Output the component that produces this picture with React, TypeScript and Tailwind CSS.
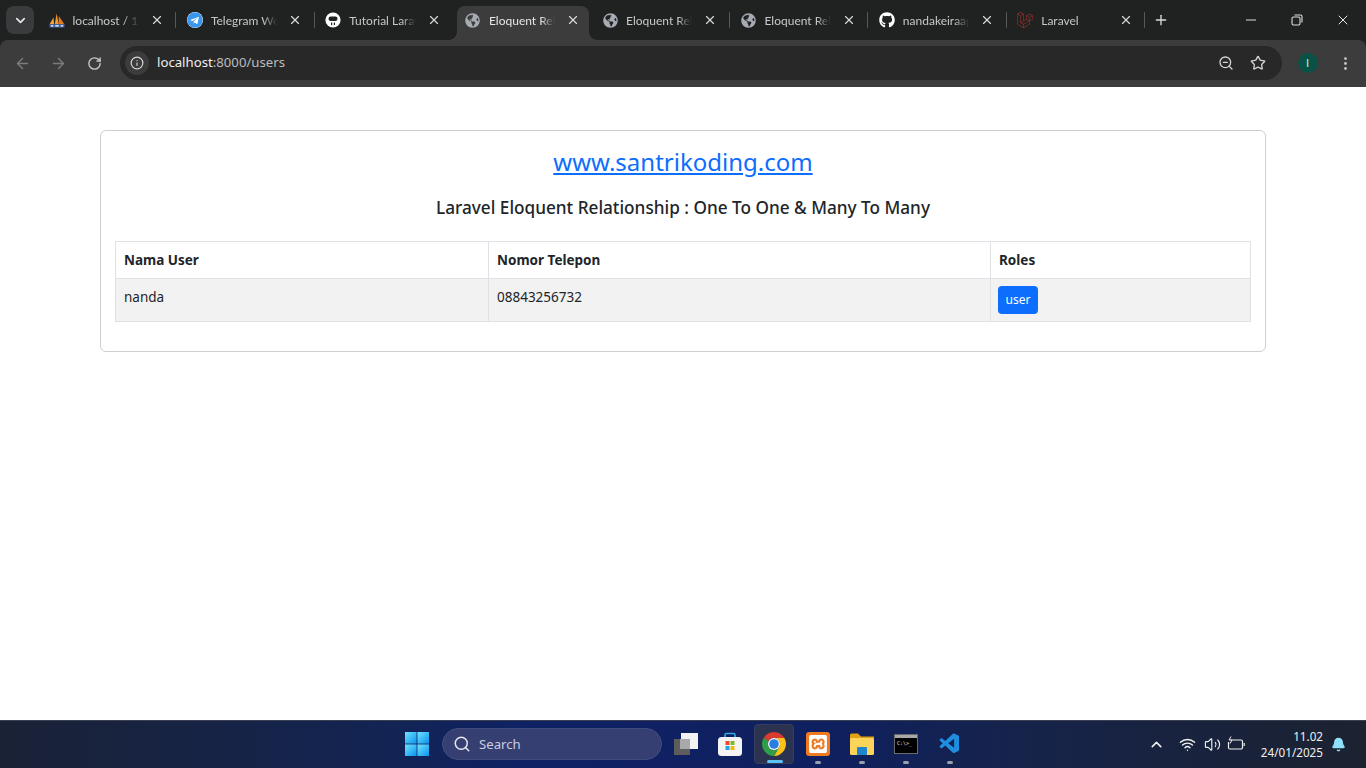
import { ArrowLeft, ArrowRight, RotateCw, Info, ZoomOut, Star, EllipsisVertical, X, Plus, Minus, ChevronDown, ChevronUp, Search, Wifi, Volume2, Bell } from "lucide-react";
import { FaGithub, FaTelegram, FaGlobeAmericas } from "react-icons/fa";
import { SiLaravel, SiXampp } from "react-icons/si";
import { VscVscode } from "react-icons/vsc";
import type { ReactNode } from "react";

function Pma() {
  return (
    <svg width="18" height="17" viewBox="0 0 18 17">
      <path d="M0.5 13 L5 5 L5.8 13 Z" fill="#f4a63a" />
      <path d="M6.5 13 L8.5 0.5 L11 13 Z" fill="#f29a2e" />
      <path d="M11 13 L11 3.5 L17.5 13 Z" fill="#e87a1c" />
      <rect x="0.5" y="12.5" width="17" height="4" fill="#3d5a96" />
      <rect x="2" y="13.5" width="3" height="2" fill="#c9d4ea" />
      <rect x="7" y="13.5" width="4" height="2" fill="#c9d4ea" />
      <rect x="13" y="13.5" width="3" height="2" fill="#c9d4ea" />
    </svg>
  );
}

function Face() {
  return (
    <svg width="16" height="16" viewBox="0 0 16 16">
      <circle cx="8" cy="8" r="7.6" fill="#ffffff" />
      <rect x="3.5" y="4.5" width="9" height="4.5" rx="2.2" fill="#202124" />
      <rect x="6" y="10.5" width="1.2" height="2.6" fill="#202124" />
      <rect x="8.8" y="10.5" width="1.2" height="2.6" fill="#202124" />
    </svg>
  );
}

const globe = <FaGlobeAmericas size={15} color="#a7abb2" />;

type TabInfo = { icon: ReactNode; title: string; active?: boolean; sep?: boolean };

const tabs: TabInfo[] = [
  { icon: <Pma />, title: "localhost / 127.0.0.1", sep: true },
  { icon: <FaTelegram size={16} color="#3a97ee" className="bg-white rounded-full" />, title: "Telegram Web", sep: true },
  { icon: <Face />, title: "Tutorial Laravel" },
  { icon: globe, title: "Eloquent Relationship", active: true },
  { icon: globe, title: "Eloquent Relationship", sep: true },
  { icon: globe, title: "Eloquent Relationship", sep: true },
  { icon: <FaGithub size={16} color="#ffffff" />, title: "nandakeiraaputra", sep: true },
  { icon: <SiLaravel size={16} color="#b5312b" />, title: "Laravel", sep: true },
];

function Tab({ tab }: { tab: TabInfo }) {
  return (
    <div
      className={
        tab.active
          ? "relative flex items-center shrink-0 w-[132px] h-[34px] mt-[6px] ml-[1.3px] mr-[5.1px] bg-[#3c3c3c] rounded-t-[8px] pl-[8px] pr-[9px] pb-[6px]"
          : "relative flex items-center shrink-0 w-[138.4px] h-[40px] pl-[8px] pr-[15px]"
      }
    >
      <span className="w-[16px] h-[16px] flex items-center justify-center shrink-0">{tab.icon}</span>
      <span
        className={`ml-[8px] pt-[1px] w-[60px] flex-1 overflow-hidden whitespace-nowrap font-['Lato',sans-serif] text-[12px] [mask-image:linear-gradient(to_right,black_78%,transparent_100%)] ${
          tab.active ? "text-[#e4e6e8]" : "text-[#c6c8ca]"
        }`}
      >
        {tab.title}
      </span>
      <X size={14} color="#d6d8da" strokeWidth={2} className="shrink-0 ml-[11px]" />
      {tab.sep && <span className="absolute right-[2.5px] top-[12px] w-px h-[16px] bg-[#55575a]" />}
      {tab.active && (
        <>
          <span className="absolute bottom-0 -left-[8px] w-[8px] h-[8px] bg-[radial-gradient(circle_at_0_0,transparent_7.5px,#3c3c3c_8px)]" />
          <span className="absolute bottom-0 -right-[8px] w-[8px] h-[8px] bg-[radial-gradient(circle_at_100%_0,transparent_7.5px,#3c3c3c_8px)]" />
        </>
      )}
    </div>
  );
}

function TabBar() {
  return (
    <div className="h-[40px] flex items-start text-white">
      <div className="ml-[6px] mt-[6px] w-[28px] h-[28px] rounded-[8px] bg-[#3a3b3c] flex items-center justify-center shrink-0">
        <ChevronDown size={15} color="#e8e8e8" strokeWidth={2.6} />
      </div>
      <div className="flex ml-[6.5px]">
        {tabs.map((t, i) => (
          <Tab key={i} tab={t} />
        ))}
      </div>
      <div className="h-[40px] flex items-center ml-[5px]">
        <Plus size={16} color="#dcdcdc" strokeWidth={2} />
      </div>
      <div className="flex-1" />
      <div className="h-[40px] flex items-center gap-[30px] pr-[15px]">
        <Minus size={16} color="#dcdcdc" strokeWidth={1.5} />
        <svg width="16" height="16" viewBox="0 0 16 16" fill="none" stroke="#dcdcdc" strokeWidth="1.1">
          <rect x="3" y="5" width="8" height="8" rx="1.5" />
          <path d="M5.5 3 H11.5 A1.5 1.5 0 0 1 13 4.5 V10.5" />
        </svg>
        <X size={16} color="#e8e8e8" strokeWidth={1.5} />
      </div>
    </div>
  );
}

function Toolbar() {
  return (
    <div className="h-[47px] bg-[#3c3c3c] flex items-center pl-[14px] pr-[12.5px] pb-[1px] rounded-t-[8px]">
      <ArrowLeft size={17} color="#7c7c7c" strokeWidth={2} />
      <ArrowRight size={17} color="#7c7c7c" strokeWidth={2} className="ml-[19px]" />
      <RotateCw size={15} color="#c8c8c8" strokeWidth={2.2} className="ml-[20px]" />
      <div className="ml-[18px] flex-1 h-[34px] rounded-full bg-[#282828] flex items-center pl-[5px] pr-[16px]">
        <div className="w-[24px] h-[24px] rounded-full bg-[#3c3c3c] flex items-center justify-center">
          <Info size={14} color="#d8d8d8" strokeWidth={2} />
        </div>
        <span className="ml-[8px] text-[13.2px] text-[#f0f0f0]">
          localhost<span className="text-[#bcbcbc]">:8000/users</span>
        </span>
        <div className="flex-1" />
        <ZoomOut size={16} color="#d4d4d4" strokeWidth={2} />
        <Star size={16} color="#d4d4d4" strokeWidth={2} className="ml-[16px]" />
      </div>
      <div className="ml-[16px] w-[20px] h-[20px] rounded-full bg-[#0a5246] flex items-center justify-center font-['Lato',sans-serif] text-[11px] text-[#cfe5de]">I</div>
      <EllipsisVertical size={17} color="#c8c8c8" strokeWidth={2} className="ml-[19px]" />
    </div>
  );
}

function Page() {
  return (
    <main className="flex-1 bg-white px-[100px] pt-[43px] text-[#212529]">
      <div className="h-[222px] border border-[#cfcfcf] rounded-[6px] px-[14px] pt-[13px]">
        <div className="text-center text-[24px] leading-[36px]">
          <a href="#" className="text-[#0d6efd] underline">
            www.santrikoding.com
          </a>
        </div>
        <div className="text-center text-[17.2px] leading-[26px] mt-[15px] font-medium">
          Laravel Eloquent Relationship : One To One &amp; Many To Many
        </div>
        <table className="mt-[20px] w-[1136px] border-collapse table-fixed text-[13.5px]">
          <thead>
            <tr className="h-[37px]">
              <th className="w-[373px] border border-[#dee2e6] px-[8px] text-left font-bold">Nama User</th>
              <th className="w-[502px] border border-[#dee2e6] px-[8px] text-left font-bold">Nomor Telepon</th>
              <th className="border border-[#dee2e6] px-[8px] text-left font-bold">Roles</th>
            </tr>
          </thead>
          <tbody>
            <tr className="h-[43px] bg-[#f2f2f2]">
              <td className="border border-[#dee2e6] px-[8px] pt-[8px] align-top leading-[20px]">nanda</td>
              <td className="border border-[#dee2e6] px-[8px] pt-[8px] align-top leading-[20px]">08843256732</td>
              <td className="border border-[#dee2e6] px-[7px] py-[7px] align-top">
                <button className="block w-[40px] h-[28px] rounded-[4px] bg-[#0d6efd] text-white text-[12px] text-center">user</button>
              </td>
            </tr>
          </tbody>
        </table>
      </div>
    </main>
  );
}

function WinLogo() {
  return (
    <svg width="24" height="24" viewBox="0 0 24 24">
      <defs>
        <linearGradient id="w" x1="0" y1="0" x2="1" y2="1">
          <stop offset="0" stopColor="#6fe3ff" />
          <stop offset="1" stopColor="#0a93ee" />
        </linearGradient>
      </defs>
      <rect x="0" y="0" width="11.6" height="11.6" fill="url(#w)" />
      <rect x="12.4" y="0" width="11.6" height="11.6" fill="url(#w)" />
      <rect x="0" y="12.4" width="11.6" height="11.6" fill="url(#w)" />
      <rect x="12.4" y="12.4" width="11.6" height="11.6" fill="url(#w)" />
    </svg>
  );
}

function Chrome() {
  return (
    <svg width="24" height="24" viewBox="4 4 40 40">
      <path d="M6.68 14 A20 20 0 0 1 41.32 14 H24 A10 10 0 0 0 15.34 19 Z" fill="#d93b30" />
      <path d="M41.32 14 A20 20 0 0 1 24 44 L32.66 29 A10 10 0 0 0 24 14 Z" fill="#fbc116" />
      <path d="M24 44 A20 20 0 0 1 6.68 14 L15.34 19 A10 10 0 0 0 32.66 29 Z" fill="#2f9e48" />
      <circle cx="24" cy="24" r="10" fill="#ffffff" />
      <circle cx="24" cy="24" r="8" fill="#2a7de1" />
    </svg>
  );
}

function Files() {
  return (
    <svg width="24" height="22" viewBox="0 0 24 22">
      <rect x="0" y="6" width="16" height="16" fill="#5d5d5d" />
      <rect x="7" y="0" width="17" height="16" fill="#f3f3f3" />
      <rect x="6" y="6" width="10" height="10" fill="#a9a9a9" />
    </svg>
  );
}

function Store() {
  return (
    <svg width="24" height="24" viewBox="0 0 24 24">
      <path d="M7 6 V3 A1.5 1.5 0 0 1 8.5 1.5 H15.5 A1.5 1.5 0 0 1 17 3 V6" fill="none" stroke="#35a7e6" strokeWidth="1.6" />
      <rect x="0" y="5" width="24" height="19" rx="3.5" fill="#f4f4f4" />
      <rect x="7.5" y="9" width="4" height="4" fill="#ea4a2b" />
      <rect x="12.5" y="9" width="4" height="4" fill="#7cbb2c" />
      <rect x="7.5" y="14" width="4" height="4" fill="#1fa3ec" />
      <rect x="12.5" y="14" width="4" height="4" fill="#fbb614" />
    </svg>
  );
}

function Folder() {
  return (
    <svg width="24" height="24" viewBox="0 0 24 24">
      <path d="M0 3 A1.5 1.5 0 0 1 1.5 1.5 H8 L11 4.5 H24 V10 H0 Z" fill="#e2a112" />
      <rect x="0" y="6" width="24" height="17" rx="1.5" fill="#fcd45a" />
      <rect x="7" y="15" width="10" height="8" rx="1" fill="#1d86cf" />
    </svg>
  );
}

function Cmd() {
  return (
    <div className="w-[24px] h-[20px] bg-black border border-[#6a6a6a] flex flex-col">
      <div className="h-[3px] bg-[#a8a8a8]" />
      <div className="flex-1 flex items-start pl-[2px] pt-[2px]">
        <span className="text-[5px] leading-[6px] text-[#e0e0e0] font-['DejaVu_Sans_Mono',monospace]">C:\&gt;_</span>
      </div>
    </div>
  );
}

function Xampp() {
  return (
    <div className="w-[24px] h-[24px] rounded-[3px] bg-[#f07a22] flex items-center justify-center">
      <SiXampp size={18} color="#ffffff" />
    </div>
  );
}

function TaskIcon({ children, active, dot }: { children: ReactNode; active?: boolean; dot?: boolean }) {
  return (
    <div className={`relative w-[40px] h-[40px] mr-[4px] rounded-[4px] flex items-center justify-center ${active ? "bg-[#2b3350] border border-[#363e5c]" : ""}`}>
      {children}
      {active && <span className="absolute bottom-[0px] left-[12px] w-[16px] h-[3px] rounded-full bg-[#5cc4f5]" />}
      {dot && <span className="absolute bottom-[0px] left-[17px] w-[6px] h-[3px] rounded-full bg-[#9aa0ab]" />}
    </div>
  );
}

function Taskbar() {
  return (
    <footer className="h-[48px] border-t border-[#3a4052] pb-[1px] flex items-center text-white bg-[linear-gradient(to_right,#1a2236_0%,#14244f_25%,#0f2263_38%,#0f2060_60%,#16234a_75%,#1b2230_100%)]">
      <div className="ml-[405px] w-[24px] h-[24px] shrink-0">
        <WinLogo />
      </div>
      <div className="ml-[13px] w-[220px] h-[32px] rounded-full bg-[#353f72] border border-[#414b7c] flex items-center pl-[10px] shrink-0">
        <Search size={18} color="#e4e6ee" strokeWidth={2} />
        <span className="ml-[8px] pt-[1px] text-[13.2px] text-[#c9cde0]">Search</span>
      </div>
      <div className="ml-[4px] flex items-center shrink-0">
        <TaskIcon><Files /></TaskIcon>
        <TaskIcon><Store /></TaskIcon>
        <TaskIcon active><Chrome /></TaskIcon>
        <TaskIcon dot><Xampp /></TaskIcon>
        <TaskIcon dot><Folder /></TaskIcon>
        <TaskIcon dot><Cmd /></TaskIcon>
        <TaskIcon dot><VscVscode size={24} color="#1f8ee0" /></TaskIcon>
      </div>
      <div className="flex-1" />
      <ChevronUp size={17} color="#f0f0f0" strokeWidth={2.2} />
      <Wifi size={17} color="#f0f0f0" strokeWidth={2} className="ml-[14px]" />
      <Volume2 size={17} color="#f0f0f0" strokeWidth={1.6} className="ml-[8px]" />
      <svg width="18" height="16" viewBox="0 0 18 16" fill="none" stroke="#f0f0f0" strokeWidth="1.2" className="ml-[6px]">
        <path d="M4 4 H14 A1.5 1.5 0 0 1 15.5 5.5 V11.5 A1.5 1.5 0 0 1 14 13 H3 A1.5 1.5 0 0 1 1.5 11.5 V6" />
        <path d="M17.2 7 V10" />
        <path d="M4 0.5 L2 4 H5 L3 7.5" strokeWidth="1" />
      </svg>
      <div className="ml-[16px] flex flex-col items-end text-[11.7px] leading-[16px] text-[#f0f0f0]">
        <span>11.02</span>
        <span>24/01/2025</span>
      </div>
      <Bell size={15} color="#8fe0fa" fill="#8fe0fa" className="ml-[8px] mr-[20px]" />
    </footer>
  );
}

export default function App() {
  return (
    <div className="w-[1366px] h-[768px] bg-[#202222] flex flex-col overflow-hidden font-['Noto_Sans','Open_Sans',sans-serif]">
      <TabBar />
      <Toolbar />
      <Page />
      <Taskbar />
    </div>
  );
}
